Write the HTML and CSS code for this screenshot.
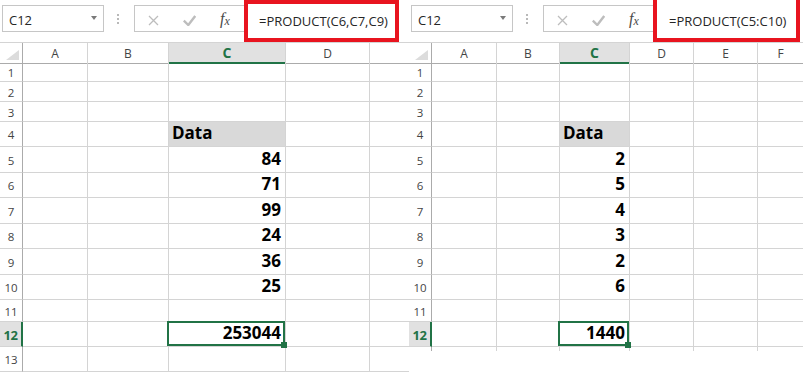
FILE: index.html
```html
<!DOCTYPE html>
<html lang="en">
<head>
    <meta charset="UTF-8">
    <meta name="viewport" content="width=device-width, initial-scale=1.0">
    <title>PRODUCT function</title>
    <link rel="stylesheet" href="styles.css">
</head>
<body>
    <section class="sheet sheet-left">
        <div class="toolbar">
            <div class="namebox">C12<span class="caret"></span></div>
            <div class="grip"></div>
            <div class="fbtns">
                <span class="fbtn"><svg width="11" height="11" viewBox="0 0 11 11"><path d="M1 1L10 10M10 1L1 10" stroke="#bdbdbd" stroke-width="1.3"/></svg></span>
                <span class="fbtn"><svg width="13" height="11" viewBox="0 0 13 11"><path d="M0.8 5.6L5.3 10L12.2 1" fill="none" stroke="#bdbdbd" stroke-width="2.4"/></svg></span>
                <span class="fbtn fx">f<small>x</small></span>
            </div>
            <div class="formula">=PRODUCT(C6,C7,C9)</div>
        </div>
        <div class="row head">
            <div class="corner"><span class="tri"></span></div>
            <div class="ch">A</div><div class="ch">B</div><div class="ch on">C</div><div class="ch">D</div><div class="ch"></div>
        </div>
        <div class="row h20"><div class="rh">1</div><div></div><div></div><div></div><div></div><div></div></div>
        <div class="row h20"><div class="rh">2</div><div></div><div></div><div></div><div></div><div></div></div>
        <div class="row h20"><div class="rh">3</div><div></div><div></div><div></div><div></div><div></div></div>
        <div class="row"><div class="rh">4</div><div></div><div></div><div class="data">Data</div><div></div><div></div></div>
        <div class="row h26"><div class="rh">5</div><div></div><div></div><div class="num">84</div><div></div><div></div></div>
        <div class="row"><div class="rh">6</div><div></div><div></div><div class="num">71</div><div></div><div></div></div>
        <div class="row h26"><div class="rh">7</div><div></div><div></div><div class="num">99</div><div></div><div></div></div>
        <div class="row"><div class="rh">8</div><div></div><div></div><div class="num">24</div><div></div><div></div></div>
        <div class="row h26"><div class="rh">9</div><div></div><div></div><div class="num">36</div><div></div><div></div></div>
        <div class="row"><div class="rh">10</div><div></div><div></div><div class="num">25</div><div></div><div></div></div>
        <div class="row h22"><div class="rh">11</div><div></div><div></div><div></div><div></div><div></div></div>
        <div class="row"><div class="rh on">12</div><div></div><div></div><div class="num sel">253044</div><div></div><div></div></div>
        <div class="row"><div class="rh">13</div><div></div><div></div><div></div><div></div><div></div></div>
    </section>

    <section class="sheet sheet-right">
        <div class="toolbar">
            <div class="namebox">C12<span class="caret"></span></div>
            <div class="grip"></div>
            <div class="fbtns">
                <span class="fbtn"><svg width="11" height="11" viewBox="0 0 11 11"><path d="M1 1L10 10M10 1L1 10" stroke="#bdbdbd" stroke-width="1.3"/></svg></span>
                <span class="fbtn"><svg width="13" height="11" viewBox="0 0 13 11"><path d="M0.8 5.6L5.3 10L12.2 1" fill="none" stroke="#bdbdbd" stroke-width="2.4"/></svg></span>
                <span class="fbtn fx">f<small>x</small></span>
            </div>
            <div class="formula">=PRODUCT(C5:C10)</div>
        </div>
        <div class="row head">
            <div class="corner"><span class="tri"></span></div>
            <div class="ch">A</div><div class="ch">B</div><div class="ch on">C</div><div class="ch">D</div><div class="ch">E</div><div class="ch">F</div>
        </div>
        <div class="row h20"><div class="rh">1</div><div></div><div></div><div></div><div></div><div></div><div></div></div>
        <div class="row h20"><div class="rh">2</div><div></div><div></div><div></div><div></div><div></div><div></div></div>
        <div class="row h20"><div class="rh">3</div><div></div><div></div><div></div><div></div><div></div><div></div></div>
        <div class="row"><div class="rh">4</div><div></div><div></div><div class="data">Data</div><div></div><div></div><div></div></div>
        <div class="row h26"><div class="rh">5</div><div></div><div></div><div class="num">2</div><div></div><div></div><div></div></div>
        <div class="row"><div class="rh">6</div><div></div><div></div><div class="num">5</div><div></div><div></div><div></div></div>
        <div class="row h26"><div class="rh">7</div><div></div><div></div><div class="num">4</div><div></div><div></div><div></div></div>
        <div class="row"><div class="rh">8</div><div></div><div></div><div class="num">3</div><div></div><div></div><div></div></div>
        <div class="row h26"><div class="rh">9</div><div></div><div></div><div class="num">2</div><div></div><div></div><div></div></div>
        <div class="row"><div class="rh">10</div><div></div><div></div><div class="num">6</div><div></div><div></div><div></div></div>
        <div class="row h22"><div class="rh">11</div><div></div><div></div><div></div><div></div><div></div><div></div></div>
        <div class="row"><div class="rh on">12</div><div></div><div></div><div class="num sel">1440</div><div></div><div></div><div></div></div>
        <div class="row stub"><div class="rh"></div><div></div><div></div><div></div><div></div><div></div><div></div></div>
    </section>
</body>
</html>
```

FILE: styles.css
```css
body {
    margin: 0;
    height: 372px;
    display: flex;
    overflow: hidden;
    background-color: #fff;
    font-family: "Open Sans", "Noto Sans", sans-serif;
    color: #262626;
}

.sheet {
    overflow: hidden;
}

.sheet-left {
    flex: none;
    width: 409px;
}

.sheet-right {
    flex: 1;
}

/* name box + formula bar */
.toolbar {
    display: flex;
    align-items: flex-start;
    height: 42px;
}

.namebox {
    display: flex;
    align-items: center;
    justify-content: space-between;
    box-sizing: border-box;
    width: 102px;
    height: 27px;
    margin: 5px 0 0 2px;
    padding: 3px 6px 0 6px;
    border: 1px solid #c6c6c6;
    font-size: 13px;
}

.caret {
    border-left: 3.5px solid transparent;
    border-right: 3.5px solid transparent;
    border-top: 4px solid #7a7a7a;
    margin-bottom: 5px;
}

.grip {
    width: 2px;
    height: 10px;
    margin: 14px 0 0 13px;
    background: repeating-linear-gradient(#b9b9b9 0 2px, transparent 2px 4px);
}

.fbtns {
    display: flex;
    align-items: center;
    box-sizing: border-box;
    width: 110px;
    height: 27px;
    margin: 5px 0 0 15px;
    padding-top: 3px;
    border: 1px solid #c6c6c6;
    border-right: none;
}

.fbtn {
    display: flex;
    justify-content: center;
    align-items: center;
    width: 36px;
}

.fx {
    font-family: "Liberation Serif", serif;
    font-style: italic;
    font-size: 16px;
    color: #4a4a4a;
    margin-top: -3px;
}

.fx small {
    font-size: 12px;
    position: relative;
    top: 3px;
}

.formula {
    box-sizing: border-box;
    width: 155px;
    height: 42px;
    padding: 8px 0 0 11px;
    border: 4px solid #e8141f;
    font-size: 13px;
    white-space: nowrap;
}

.sheet-right .formula {
    width: 147px;
    border-top: none;
    padding: 12px 0 0 12px;
}

/* grid */
.row {
    display: grid;
    height: 25px;
}

.sheet-left .row {
    grid-template-columns: 23px 65px 81px 117px 84px 1fr;
}

.sheet-right .row {
    grid-template-columns: 23px 65px 63px 70px 64px 64px 1fr;
}

.row.h20 { height: 20px; }
.row.h22 { height: 22px; }
.row.h26 { height: 26px; }
.row.stub { height: 4px; }

.row > div {
    display: flex;
    align-items: flex-end;
    box-sizing: border-box;
    min-width: 0;
    padding: 0 4px 3px 3px;
    border-right: 1px solid #d4d4d4;
    border-bottom: 1px solid #d4d4d4;
    font-size: 17px;
    font-weight: 700;
    line-height: 20px;
    color: #000;
}

.row > div:last-child {
    border-right: none;
}

.row.stub > div {
    border-bottom: none;
}

.head {
    height: 20px;
    box-sizing: border-box;
    border-top: 1px solid #d4d4d4;
}

.row .ch {
    justify-content: center;
    align-items: center;
    padding: 0;
    border-bottom-color: #ababab;
    font-size: 12px;
    font-weight: 400;
    line-height: normal;
    color: #444;
}

.row .ch.on {
    background-color: #e1e1e1;
    border-bottom: 2px solid #217346;
    font-size: 14px;
    font-weight: 700;
    color: #217346;
}

.row .corner {
    justify-content: flex-end;
    padding: 0 3px 3px 0;
    border-right-color: #ababab;
    border-bottom-color: #ababab;
}

.tri {
    width: 13px;
    height: 10px;
    background-color: #dcdcdc;
    clip-path: polygon(100% 0, 100% 100%, 0 100%);
}

.row .rh {
    justify-content: center;
    align-items: center;
    padding: 1px 0 0;
    border-right-color: #ababab;
    font-size: 11.5px;
    font-weight: 400;
    line-height: normal;
    color: #444;
}

.row .rh.on {
    background-color: #e1e1e1;
    border-right: 2px solid #217346;
    font-size: 13px;
    font-weight: 700;
    letter-spacing: -0.5px;
    color: #217346;
}

.data {
    background-color: #d9d9d9;
}

.num {
    justify-content: flex-end;
}

.sel {
    position: relative;
}

.sel::after {
    content: "";
    position: absolute;
    inset: -1px 0 0 -2px;
    border: 2px solid #217346;
}

.sel::before {
    content: "";
    position: absolute;
    right: -2px;
    bottom: -2px;
    width: 6px;
    height: 6px;
    background-color: #217346;
    z-index: 1;
}
```
